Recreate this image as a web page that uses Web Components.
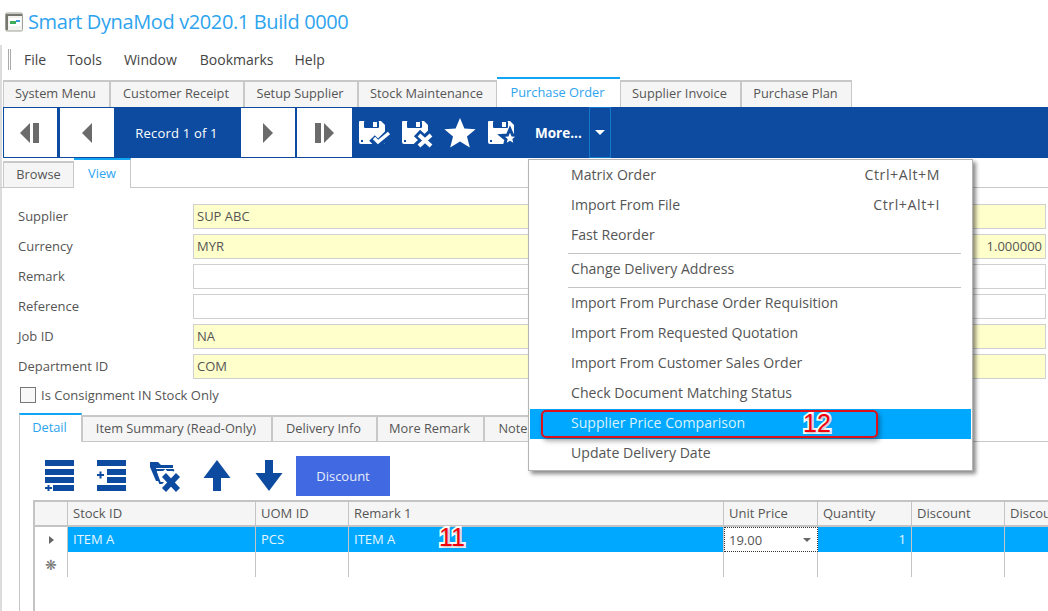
<!DOCTYPE html>
<html>
<head>
<meta charset="utf-8">
<title>Smart DynaMod</title>
<style>
    html, body { margin: 0; height: 100%; }
    body {
        width: 1048px;
        height: 611px;
        overflow: hidden;
        position: relative;
        background: #fff;
        color: #555;
        font: 13px "Open Sans", "Noto Sans", sans-serif;
    }
    app-main { display: block; box-shadow: inset 2px 0 #dcdcdc; }
</style>
</head>
<body>
<app-titlebar>Smart DynaMod v2020.1 Build 0000</app-titlebar>
<app-main>
    <app-menubar></app-menubar>
    <doc-tabs></doc-tabs>
    <record-bar></record-bar>
    <view-tabs></view-tabs>
    <record-form></record-form>
    <detail-tabs></detail-tabs>
    <detail-panel>
        <detail-toolbar></detail-toolbar>
        <item-grid></item-grid>
    </detail-panel>
</app-main>
<more-menu></more-menu>
<call-out style="left:439px;top:522px">11</call-out>
<call-out style="left:803px;top:408px">12</call-out>

<script>
const FONT = `"Open Sans", "Noto Sans", sans-serif`;

const floppy = (extra) => `<svg width="34" height="30" viewBox="0 0 34 30">
    <path fill="#fff" d="M2 3 H23 L27 7 V24 Q27 26 25 26 H3 Q1 26 1 24 V4 Q1 3 2 3 Z"/>
    <rect x="6" y="3" width="15" height="7" rx="1" fill="#0d4ba0"/>
    <rect x="15" y="4" width="4" height="5" fill="#fff"/>
    <rect x="3" y="22" width="2" height="2" fill="#0d4ba0"/>
    ${extra}
</svg>`;

const icons = {
    first: `<svg width="24" height="22" viewBox="0 0 24 22"><path fill="#6b6b6b" d="M11 1 V21 L1 11 Z"/><rect x="14" y="1" width="6" height="20" fill="#6b6b6b"/></svg>`,
    prev: `<svg width="12" height="22" viewBox="0 0 12 22"><path fill="#6b6b6b" d="M11 1 V21 L1 11 Z"/></svg>`,
    next: `<svg width="12" height="22" viewBox="0 0 12 22"><path fill="#6b6b6b" d="M1 1 V21 L11 11 Z"/></svg>`,
    last: `<svg width="24" height="22" viewBox="0 0 24 22"><rect x="2" y="1" width="6" height="20" fill="#6b6b6b"/><path fill="#6b6b6b" d="M11 1 V21 L21 11 Z"/></svg>`,
    saveTick: floppy(`<path d="M14 20 L20 26 L32 14" fill="none" stroke="#0d4ba0" stroke-width="8"/><path d="M16 20 L20 24 L31 15" fill="none" stroke="#fff" stroke-width="3.4"/>`),
    saveCross: floppy(`<path d="M16 15 L31 29 M31 15 L16 29" stroke="#0d4ba0" stroke-width="9"/><path d="M18 17 L30 28 M30 17 L18 28" stroke="#fff" stroke-width="4"/>`),
    star: `<svg width="32" height="30" viewBox="0 0 32 30"><path fill="#fff" d="M16 0 L20.4 10.4 L31.6 11.2 L23 18.4 L25.8 29.4 L16 23.4 L6.2 29.4 L9 18.4 L0.4 11.2 L11.6 10.4 Z"/></svg>`,
    saveStar: floppy(`<path stroke="#0d4ba0" stroke-width="3" fill="#fff" d="M23 11 L25.6 17 L32 17.5 L27 21.6 L28.7 28 L23 24.5 L17.3 28 L19 21.6 L14 17.5 L20.4 17 Z"/>`),
    rowAdd: `<svg width="30" height="31" viewBox="0 0 30 31" fill="#0d4ba0"><rect x="0" y="0" width="29" height="6"/><rect x="0" y="9" width="29" height="6"/><rect x="0" y="17" width="29" height="6"/><rect x="8" y="25" width="21" height="6"/><path d="M2.500 25 h2 v2 h2.500 v2 h-2.500 v2 h-2 v-2 h-2.500 v-2 h2.500 z"/></svg>`,
    rowInsert: `<svg width="30" height="31" viewBox="0 0 30 31" fill="#0d4ba0"><rect x="0" y="0" width="29" height="6"/><rect x="10" y="9" width="19" height="6"/><rect x="10" y="17" width="19" height="6"/><rect x="0" y="25" width="29" height="6"/><path d="M2.500 11.500 h2 v2.500 h2.500 v2 h-2.500 v2.500 h-2 v-2.500 h-2.500 v-2 h2.500 z"/></svg>`,
    folderCross: `<svg width="34" height="33" viewBox="0 0 34 33"><path fill="#0d4ba0" d="M0 1 H8 L11 4 H23 V7 H6 L9 20 L6 20 L0 6 Z"/><path fill="none" stroke="#0d4ba0" stroke-width="2" d="M5 9 H23 L26 13 M5 9 L10 22 H15"/><path d="M12 11 L29 30 M29 11 L12 30" stroke="#fff" stroke-width="9"/><path d="M14 14 L28 29 M28 14 L14 29" stroke="#0d4ba0" stroke-width="5.500"/></svg>`,
    up: `<svg width="28" height="31" viewBox="0 0 28 31"><path fill="#0d4ba0" d="M14 0 L27.500 18 H18 V31 H10 V18 H0.500 Z"/></svg>`,
    down: `<svg width="28" height="31" viewBox="0 0 28 31"><path fill="#0d4ba0" d="M10 0 H18 V13 H27.500 L14 31 L0.500 13 H10 Z"/></svg>`,
};

class AppTitlebar extends HTMLElement {
    constructor() {
        super();
        this.attachShadow({ mode: "open" }).innerHTML = `
<style>
    :host { display: flex; align-items: center; gap: 5px; height: 45px; padding: 0 0 2px 5px; box-sizing: border-box; }
    svg { flex: none; }
    .title { font: 20px/1 ${FONT}; color: #2ea4ee; letter-spacing: -0.38px; }
</style>
<svg width="18" height="20" viewBox="0 0 18 20">
    <rect x="0.500" y="1" width="17" height="18" rx="1.500" fill="#f2f2ee" stroke="#a0a09a"/>
    <path d="M1 2 H17 V4 H3 V18 H1 Z" fill="#77776f"/>
    <rect x="4" y="6" width="12" height="8" fill="#fff"/>
    <rect x="5" y="9" width="6" height="3" fill="#3fae5a"/>
    <rect x="11" y="8" width="4" height="2" fill="#3a9cd8"/>
</svg>
<span class="title"><slot></slot></span>`;
    }
}

class AppMenubar extends HTMLElement {
    constructor() {
        super();
        this.attachShadow({ mode: "open" }).innerHTML = `
<style>
    :host { display: flex; align-items: center; height: 32px; padding: 0 0 3px 8px; box-sizing: border-box; font: 14px ${FONT}; color: #444; }
    .grip { width: 3px; height: 21px; border-left: 1px solid #aaa; border-right: 1px solid #aaa; box-sizing: border-box; margin-right: 13px; }
</style>
<div class="grip"></div>
<span style="margin-right:21px">File</span><span style="margin-right:22px">Tools</span><span style="margin-right:23px">Window</span><span style="margin-right:21px">Bookmarks</span><span>Help</span>`;
    }
}

// tab strip shared by the three tab rows
class TabStrip extends HTMLElement {
    get tabs() { return []; }
    get extra() { return ""; }
    constructor() {
        super();
        const tabs = this.tabs.map(t =>
            `<div class="tab${t.active ? " active" : ""}" style="width:${t.width}px">${t.label}</div>`).join("");
        this.attachShadow({ mode: "open" }).innerHTML = `
<style>
    :host { display: flex; align-items: flex-end; box-sizing: border-box; font: 12.800px ${FONT}; color: #555; }
    .tab {
        box-sizing: border-box;
        flex: none;
        height: 27px;
        padding: 0 2px 4px 0;
        display: flex;
        align-items: center;
        justify-content: center;
        white-space: nowrap;
        background: #f5f5f5;
        border: 2px solid #c8c8c8;
        border-bottom: 0;
        border-left-width: 1px;
        border-right-width: 1px;
    }
    .tab.active {
        height: 30px;
        background: #fff;
        color: #2ea4ee;
        border: 0;
        border-top: 2px solid #12a5f4;
        padding-bottom: 3px;
    }
    ${this.extra}
</style>
${tabs}`;
    }
}

class DocTabs extends TabStrip {
    get tabs() {
        return [
            { label: "System Menu", width: 107 },
            { label: "Customer Receipt", width: 134 },
            { label: "Setup Supplier", width: 114 },
            { label: "Stock Maintenance", width: 139 },
            { label: "Purchase Order", width: 123, active: true },
            { label: "Supplier Invoice", width: 121 },
            { label: "Purchase Plan", width: 111 },
        ];
    }
    get extra() { return `:host { height: 30px; padding-left: 3px; }`; }
}

class ViewTabs extends TabStrip {
    get tabs() {
        return [
            { label: "Browse", width: 71 },
            { label: "View", width: 57, active: true },
        ];
    }
    get extra() {
        return `:host { height: 30px; padding-left: 3px; border-bottom: 1px solid #c8c8c8; }
    .tab { height: 26px; padding: 0 0 3px; }
    .tab.active { height: 30px; margin-bottom: -1px; border-right: 1px solid #c8c8c8; padding-bottom: 3px; }`;
    }
}

class DetailTabs extends TabStrip {
    get tabs() {
        return [
            { label: "Detail", width: 63, active: true },
            { label: "Item Summary (Read-Only)", width: 190 },
            { label: "Delivery Info", width: 105 },
            { label: "More Remark", width: 107 },
            { label: "Note", width: 60 },
        ];
    }
    get extra() {
        return `:host { height: 29px; margin-left: 19px; border-bottom: 1px solid #c8c8c8; }
    .tab { height: 26px; padding-bottom: 3px; }
    .tab.active { height: 29px; margin-bottom: -1px; border-left: 1px solid #c8c8c8; border-right: 1px solid #c8c8c8; padding-bottom: 3px; }`;
    }
}

class RecordBar extends HTMLElement {
    constructor() {
        super();
        this.attachShadow({ mode: "open" }).innerHTML = `
<style>
    :host { display: flex; align-items: stretch; height: 51px; margin-left: 3px; background: #0d4ba0; color: #fff; font: 13px ${FONT}; box-sizing: border-box; padding: 1px 0 1px 1px; }
    .nav { display: flex; align-items: center; justify-content: center; background: #fff; box-sizing: border-box; }
    .record { width: 127px; box-sizing: border-box; padding-right: 2px; display: flex; align-items: center; justify-content: center; letter-spacing: 0.2px; }
    .act { display: flex; align-items: center; }
    .more { font-weight: 700; font-size: 13.500px; margin-left: 14px; width: 54px; align-self: center; white-space: nowrap; }
    .drop { width: 22px; margin-top: -1px; margin-bottom: -1px; border: 1px solid #1478c8; box-sizing: border-box; display: flex; align-items: center; justify-content: center; }
    .drop i { width: 0; height: 0; border: 5px solid transparent; border-top-color: #fff; border-bottom: 0; }
</style>
<div class="nav" style="width:53px;margin-right:3px">${icons.first}</div>
<div class="nav" style="width:54px">${icons.prev}</div>
<div class="record">Record 1 of 1</div>
<div class="nav" style="width:54px;margin-right:2px">${icons.next}</div>
<div class="nav" style="width:55px">${icons.last}</div>
<div class="act" style="margin-left:6px;gap:9px">${icons.saveTick}${icons.saveCross}</div>
<div class="act" style="margin-left:9px">${icons.star}</div>
<div class="act" style="margin-left:11px">${icons.saveStar}</div>
<div class="more">More...</div>
<div class="drop"><i></i></div>`;
    }
}

class FormRow extends HTMLElement {
    constructor() {
        super();
        this.attachShadow({ mode: "open" }).innerHTML = `
<style>
    :host { display: grid; grid-template-columns: 175px 1fr; align-items: center; height: 30px; font: 13px ${FONT}; color: #555; }
    .box { box-sizing: border-box; height: 25px; border: 1px solid #d0d0d0; display: flex; align-items: center; justify-content: space-between; padding: 0 3px; background: #fff; color: #555; }
    :host([req]) .box { background: #ffffcc; }
</style>
<div class="label"></div>
<div class="box"><span class="val"></span><span class="right"></span></div>`;
    }
    connectedCallback() {
        this.shadowRoot.querySelector(".label").textContent = this.getAttribute("label");
        this.shadowRoot.querySelector(".val").textContent = this.getAttribute("value") || "";
        this.shadowRoot.querySelector(".right").textContent = this.getAttribute("right") || "";
    }
}

class RecordForm extends HTMLElement {
    constructor() {
        super();
        this.attachShadow({ mode: "open" }).innerHTML = `
<style>
    :host { display: block; padding: 13px 2px 9px 18px; font: 13px ${FONT}; color: #555; }
    .check { display: flex; align-items: center; gap: 5px; margin: 4px 0 0 2px; height: 19px; }
    .check i { width: 16px; height: 16px; box-sizing: border-box; border: 1px solid #777; background: #f8f8f8; }
</style>
<form-row label="Supplier" value="SUP ABC" req></form-row>
<form-row label="Currency" value="MYR" right="1.000000" req></form-row>
<form-row label="Remark"></form-row>
<form-row label="Reference"></form-row>
<form-row label="Job ID" value="NA" req></form-row>
<form-row label="Department ID" value="COM" req></form-row>
<div class="check"><i></i><span>Is Consignment IN Stock Only</span></div>`;
    }
}

class DetailPanel extends HTMLElement {
    constructor() {
        super();
        this.attachShadow({ mode: "open" }).innerHTML = `
<style>
    :host { display: block; margin-left: 19px; border-left: 1px solid #c8c8c8; }
</style>
<slot></slot>`;
    }
}

class DetailToolbar extends HTMLElement {
    constructor() {
        super();
        this.attachShadow({ mode: "open" }).innerHTML = `
<style>
    :host { display: flex; align-items: center; height: 58px; padding: 9px 0 0 25px; box-sizing: border-box; font: 13px ${FONT}; }
    svg { flex: none; display: block; }
    span { display: block; flex: none; }
    .btn { width: 94px; height: 40px; margin-left: 13px; background: #4169e1; color: #e8ecfb; display: flex; align-items: center; justify-content: center; }
</style>
<span style="margin-right:22px">${icons.rowAdd}</span>
<span style="margin-right:23px">${icons.rowInsert}</span>
<span style="margin:3px 19px 0 0">${icons.folderCross}</span>
<span style="margin-right:24px">${icons.up}</span>
${icons.down}
<div class="btn">Discount</div>`;
    }
}

class ItemGrid extends HTMLElement {
    constructor() {
        super();
        const cols = ["Stock ID", "UOM ID", "Remark 1", "Unit Price", "Quantity", "Discount", "Discount"];
        const first = ["ITEM A", "PCS", "ITEM A", "", "1", "", ""];
        const head = cols.map(c => `<div class="h">${c}</div>`).join("");
        const row = first.map((c, i) => i === 3
            ? `<div class="editor"><span>19.00</span><i></i></div>`
            : `<div class="c sel${i === 4 ? " num" : ""}">${c}</div>`).join("");
        const blank = first.map(() => `<div class="c"></div>`).join("");
        this.attachShadow({ mode: "open" }).innerHTML = `
<style>
    :host {
        display: block;
        height: 112px;
        margin-left: 13px;
        box-sizing: border-box;
        border-left: 2px solid #c4c4c4;
        border-top: 2px solid #c4c4c4;
        font: 13px ${FONT};
        color: #555;
        overflow: hidden;
    }
    .grid { display: grid; grid-template-columns: 33px 188px 93px 375px 94px 94px 93px 100px; grid-auto-rows: 25px; }
    .h { background: #f5f5f5; border-right: 1px solid #c4c4c4; border-bottom: 2px solid #c4c4c4; box-sizing: border-box; padding: 0 5px; line-height: 23px; white-space: nowrap; overflow: hidden; }
    .c { border-right: 1px solid #c4c4c4; box-sizing: border-box; padding: 0 5px; line-height: 25px; color: #555; }
    .sel { background: #00a8ff; color: #e6f6ff; }
    .num { text-align: right; }
    .editor { box-sizing: border-box; border: 1px dotted #333; background: #fff; display: flex; align-items: center; justify-content: space-between; padding: 0 4px; }
    .editor i { width: 0; height: 0; border: 4px solid transparent; border-top-color: #666; border-bottom: 0; margin-right: 2px; }
    .ind { display: flex; align-items: center; justify-content: center; border-right: 1px solid #c4c4c4; box-sizing: border-box; color: #777; }
    .ind i { width: 0; height: 0; border: 4px solid transparent; border-left: 5px solid #666; border-right: 0; }
</style>
<div class="grid">
    <div class="h"></div>${head}
    <div class="ind"><i></i></div>${row}
    <div class="ind" style="font-size:14px">&#10059;</div>${blank}
</div>`;
    }
}

class MoreMenu extends HTMLElement {
    constructor() {
        super();
        const item = (label, key, cls) => `<div class="item ${cls || ""}"><span>${label}</span><span class="key">${key || ""}</span></div>`;
        this.attachShadow({ mode: "open" }).innerHTML = `
<style>
    :host {
        position: absolute;
        left: 528px;
        top: 159px;
        width: 445px;
        box-sizing: border-box;
        padding: 1px;
        background: #fff;
        border: 1px solid #b4b4b4;
        box-shadow: 3px 3px 4px rgba(0, 0, 0, 0.45);
        font: 14.100px ${FONT};
        color: #555;
    }
    .item { display: flex; justify-content: space-between; height: 30px; box-sizing: border-box; padding: 0 31px 4px 41px; align-items: center; }
    .key { letter-spacing: 0.6px; }
    .item.on { background: #00a8ff; color: #d8f2ff; }
    .sep { height: 1px; background: #c4c4c4; margin: 2px 10px 1px 38px; }
    .ring { position: absolute; left: 12px; top: 250px; width: 337px; height: 28px; box-sizing: border-box; border: 2px solid #e0101a; border-radius: 5px; box-shadow: 2px 3px 5px rgba(0, 0, 0, 0.35); }
</style>
${item("Matrix Order", "Ctrl+Alt+M")}
${item("Import From File", "Ctrl+Alt+I")}
${item("Fast Reorder")}
<div class="sep"></div>
${item("Change Delivery Address")}
<div class="sep"></div>
${item("Import From Purchase Order Requisition")}
${item("Import From Requested Quotation")}
${item("Import From Customer Sales Order")}
${item("Check Document Matching Status")}
${item("Supplier Price Comparison", "", "on")}
${item("Update Delivery Date")}
<div class="ring"></div>`;
    }
}

class CallOut extends HTMLElement {
    constructor() {
        super();
        this.attachShadow({ mode: "open" }).innerHTML = `
<style>
    :host {
        position: absolute;
        font: 400 25px/30px "Liberation Sans", sans-serif;
        color: #f0000f;
        -webkit-text-stroke: 4px #fff;
        paint-order: stroke fill;
        text-shadow: 1px 1px 3px rgba(0, 0, 0, 0.35);
    }
</style>
<slot></slot>`;
    }
}

customElements.define("app-titlebar", AppTitlebar);
customElements.define("app-menubar", AppMenubar);
customElements.define("doc-tabs", DocTabs);
customElements.define("view-tabs", ViewTabs);
customElements.define("detail-tabs", DetailTabs);
customElements.define("record-bar", RecordBar);
customElements.define("form-row", FormRow);
customElements.define("record-form", RecordForm);
customElements.define("detail-panel", DetailPanel);
customElements.define("detail-toolbar", DetailToolbar);
customElements.define("item-grid", ItemGrid);
customElements.define("more-menu", MoreMenu);
customElements.define("call-out", CallOut);
</script>
</body>
</html>
